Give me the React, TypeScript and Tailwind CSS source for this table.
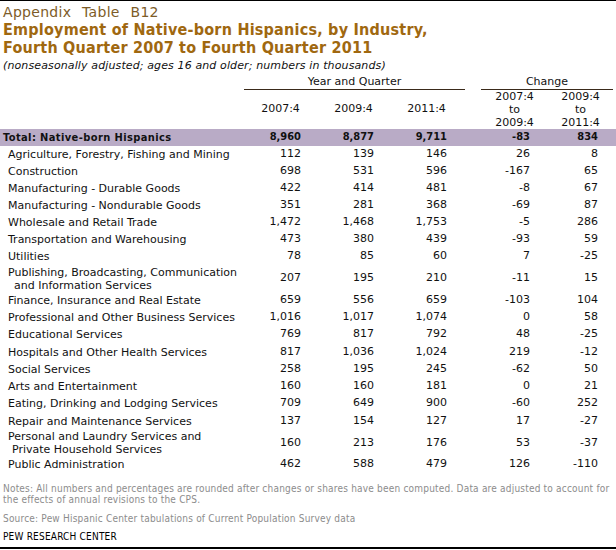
type Row = { label: string[]; v: string[]; h: string; bold?: boolean };

const ROWS: Row[] = [
  { label: ["Total: Native-born Hispanics"], v: ["8,960", "8,877", "9,711", "-83", "834"], h: "h-[17px]", bold: true },
  { label: ["Agriculture, Forestry, Fishing and Mining"], v: ["112", "139", "146", "26", "8"], h: "h-[17px]" },
  { label: ["Construction"], v: ["698", "531", "596", "-167", "65"], h: "h-[17px]" },
  { label: ["Manufacturing - Durable Goods"], v: ["422", "414", "481", "-8", "67"], h: "h-[17px]" },
  { label: ["Manufacturing - Nondurable Goods"], v: ["351", "281", "368", "-69", "87"], h: "h-[17px]" },
  { label: ["Wholesale and Retail Trade"], v: ["1,472", "1,468", "1,753", "-5", "286"], h: "h-[17px]" },
  { label: ["Transportation and Warehousing"], v: ["473", "380", "439", "-93", "59"], h: "h-[17px]" },
  { label: ["Utilities"], v: ["78", "85", "60", "7", "-25"], h: "h-[17px]" },
  { label: ["Publishing, Broadcasting, Communication", "and Information Services"], v: ["207", "195", "210", "-11", "15"], h: "h-[27px]" },
  { label: ["Finance, Insurance and Real Estate"], v: ["659", "556", "659", "-103", "104"], h: "h-[17px]" },
  { label: ["Professional and Other Business Services"], v: ["1,016", "1,017", "1,074", "0", "58"], h: "h-[17px]" },
  { label: ["Educational Services"], v: ["769", "817", "792", "48", "-25"], h: "h-[17px]" },
  { label: ["Hospitals and Other Health Services"], v: ["817", "1,036", "1,024", "219", "-12"], h: "h-[18px]" },
  { label: ["Social Services"], v: ["258", "195", "245", "-62", "50"], h: "h-[17px]" },
  { label: ["Arts and Entertainment"], v: ["160", "160", "181", "0", "21"], h: "h-[17px]" },
  { label: ["Eating, Drinking and Lodging Services"], v: ["709", "649", "900", "-60", "252"], h: "h-[17px]" },
  { label: ["Repair and Maintenance Services"], v: ["137", "154", "127", "17", "-27"], h: "h-[18px]" },
  { label: ["Personal and Laundry Services and", "Private Household Services"], v: ["160", "213", "176", "53", "-37"], h: "h-[26px]" },
  { label: ["Public Administration"], v: ["462", "588", "479", "126", "-110"], h: "h-[17px]" },
];

const COND = "font-['DejaVu_Sans_Condensed','DejaVu_Sans',sans-serif]";

function DataRow({ row }: { row: Row }) {
  const cell = "flex items-center justify-end";
  return (
    <div className={`flex ${row.h} ${row.bold ? `bg-[#b9abc6] font-bold ${COND}` : ""}`}>
      <div
        className={`w-[244px] flex flex-col justify-center leading-[13px] ${
          row.bold ? "pl-[3px] tracking-[0.4px]" : "pl-[8px]"
        }`}
      >
        {row.label.map((l, i) => (
          <span key={i} className={i > 0 ? (row.label[0].startsWith("Pers") ? "pl-[4px]" : "pl-[6px]") : ""}>
            {l}
          </span>
        ))}
      </div>
      <div className={`w-[73px] pr-[16px] ${cell}`}>{row.v[0]}</div>
      <div className={`w-[73px] pr-[16px] ${cell}`}>{row.v[1]}</div>
      <div className={`w-[73px] pr-[16px] ${cell}`}>{row.v[2]}</div>
      <div className="w-[18px]" />
      <div className={`w-[67px] pr-[18px] ${cell}`}>{row.v[3]}</div>
      <div className={`w-[67px] pr-[17px] ${cell}`}>{row.v[4]}</div>
    </div>
  );
}

export default function App() {
  return (
    <div className="w-[616px] h-[550px] bg-white text-[#111] font-['DejaVu_Sans',sans-serif] text-[11px]">
      <div className="border-t border-black h-[549px] border-b-2 flex flex-col">
        <div className="pl-[3px] pt-[2px] text-[14px] leading-[18px] text-[#7d5c28] tracking-[0.3px] [word-spacing:6px]">
          Appendix Table B12
        </div>
        <div className={`pl-[3px] text-[16px] leading-[18px] font-bold text-[#a06810] tracking-[0.22px] ${COND}`}>
          <div>Employment of Native-born Hispanics, by Industry,</div>
          <div>Fourth Quarter 2007 to Fourth Quarter 2011</div>
        </div>
        <div className="pl-[3px] pt-[2px] italic leading-[14px] tracking-[0.12px]">
          (nonseasonally adjusted; ages 16 and older; numbers in thousands)
        </div>

        {/* header */}
        <div className="flex mt-[2px]">
          <div className="w-[244px]" />
          <div className="w-[221px] flex flex-col">
            <div className="text-center leading-[14px] border-b border-[#3a2a1a]">Year and Quarter</div>
            <div className="flex h-[39px]">
              <div className="w-[73px] flex items-center justify-center">2007:4</div>
              <div className="w-[73px] flex items-center justify-center">2009:4</div>
              <div className="w-[73px] flex items-center justify-center">2011:4</div>
            </div>
          </div>
          <div className="w-[16px]" />
          <div className="w-[132px] flex flex-col">
            <div className="text-center leading-[14px] border-b border-[#3a2a1a]">Change</div>
            <div className="flex h-[39px] leading-[13px]">
              <div className="w-[67px] flex flex-col items-center justify-center">
                <span>2007:4</span>
                <span>to</span>
                <span>2009:4</span>
              </div>
              <div className="w-[65px] flex flex-col items-center justify-center">
                <span>2009:4</span>
                <span>to</span>
                <span>2011:4</span>
              </div>
            </div>
          </div>
        </div>

        <div className="flex flex-col">
          {ROWS.map((r) => (
            <DataRow key={r.label[0]} row={r} />
          ))}
        </div>

        <div className={`pl-[3px] pt-[10px] text-[10px] leading-[11px] text-[#8c8c8c] tracking-[0.2px] whitespace-nowrap ${COND}`}>
          <div>
            Notes: All numbers and percentages are rounded after changes or shares have been computed. Data are adjusted to account for
          </div>
          <div>the effects of annual revisions to the CPS.</div>
        </div>
        <div className={`pl-[3px] pt-[8px] text-[10px] leading-[11px] text-[#8c8c8c] tracking-[0.2px] ${COND}`}>
          Source: Pew Hispanic Center tabulations of Current Population Survey data
        </div>
        <div className={`pl-[3px] pt-[7px] text-[10px] leading-[11px] text-black tracking-[0.2px] ${COND}`}>
          PEW RESEARCH CENTER
        </div>
      </div>
    </div>
  );
}
